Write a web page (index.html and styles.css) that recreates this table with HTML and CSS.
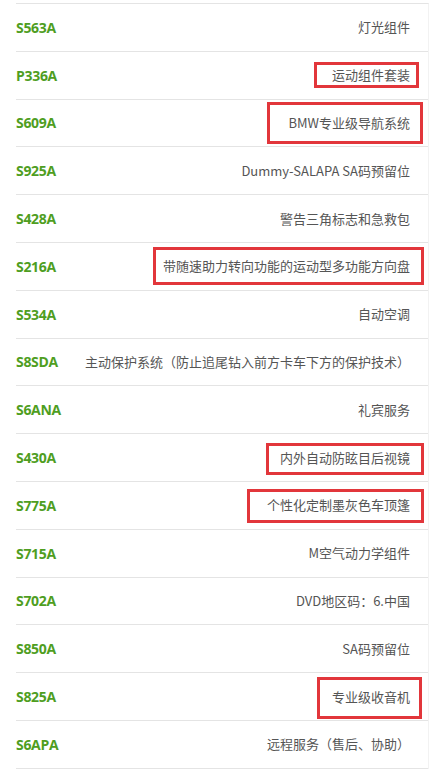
FILE: index.html
```html
<!DOCTYPE html>
<html lang="zh-CN">
<head>
    <meta charset="UTF-8">
    <meta name="viewport" content="width=device-width, initial-scale=1.0">
    <title>选装配置</title>
    <link rel="stylesheet" href="styles.css">
</head>
<body>
    <ul class="options">
        <li><span class="code">S563A</span><span class="desc">灯光组件</span></li>
        <li><span class="code">P336A</span><span class="desc mark mark-a">运动组件套装</span></li>
        <li><span class="code">S609A</span><span class="desc mark mark-b">BMW专业级导航系统</span></li>
        <li><span class="code">S925A</span><span class="desc">Dummy-SALAPA SA码预留位</span></li>
        <li><span class="code">S428A</span><span class="desc">警告三角标志和急救包</span></li>
        <li><span class="code">S216A</span><span class="desc mark mark-c">带随速助力转向功能的运动型多功能方向盘</span></li>
        <li><span class="code">S534A</span><span class="desc">自动空调</span></li>
        <li><span class="code">S8SDA</span><span class="desc">主动保护系统（防止追尾钻入前方卡车下方的保护技术）</span></li>
        <li><span class="code">S6ANA</span><span class="desc">礼宾服务</span></li>
        <li><span class="code">S430A</span><span class="desc mark mark-d">内外自动防眩目后视镜</span></li>
        <li><span class="code">S775A</span><span class="desc mark mark-e">个性化定制墨灰色车顶篷</span></li>
        <li><span class="code">S715A</span><span class="desc">M空气动力学组件</span></li>
        <li><span class="code">S702A</span><span class="desc">DVD地区码：6.中国</span></li>
        <li><span class="code">S850A</span><span class="desc">SA码预留位</span></li>
        <li><span class="code">S825A</span><span class="desc mark mark-f">专业级收音机</span></li>
        <li><span class="code">S6APA</span><span class="desc">远程服务（售后、协助）</span></li>
    </ul>
</body>
</html>
```

FILE: styles.css
```css
body {
    margin: 0;
    padding-top: 3px;
    background-color: #fff;
    font-family: "Noto Sans CJK SC", "Noto Sans", sans-serif;
}
.options {
    list-style: none;
    margin: 0 2px 0 16px;
    padding: 0;
    border-top: 1px solid #e4e4e4;
    border-right: 1px solid #f2f2f2;
}
.options li {
    display: flex;
    justify-content: space-between;
    align-items: center;
    gap: 10px;
    height: 46.8px;
    padding-right: 18px;
    border-bottom: 1px solid #e4e4e4;
}
.code {
    color: #4f9e1f;
    font-family: "Open Sans", "Noto Sans", sans-serif;
    font-weight: 700;
    font-size: 14px;
    letter-spacing: -0.3px;
    white-space: nowrap;
}
.desc {
    color: #555;
    font-size: 13px;
    line-height: 18px;
    text-align: right;
    white-space: nowrap;
}
.mark {
    position: relative;
}
.mark::after {
    content: "";
    position: absolute;
    border: 3px solid #e2363b;
}
.mark-a::after { top: -4px; bottom: -4px; left: -18px; right: -9px; }
.mark-b::after { top: -12px; bottom: -12px; left: -21px; right: -13px; }
.mark-c::after { top: -10px; bottom: -10px; left: -10px; right: -14px; }
.mark-d::after { top: -6px; bottom: -8px; left: -14px; right: -14px; }
.mark-e::after { top: -7px; bottom: -9px; left: -20px; right: -14px; }
.mark-f::after { top: -11px; bottom: -13px; left: -15px; right: -12px; }
```
